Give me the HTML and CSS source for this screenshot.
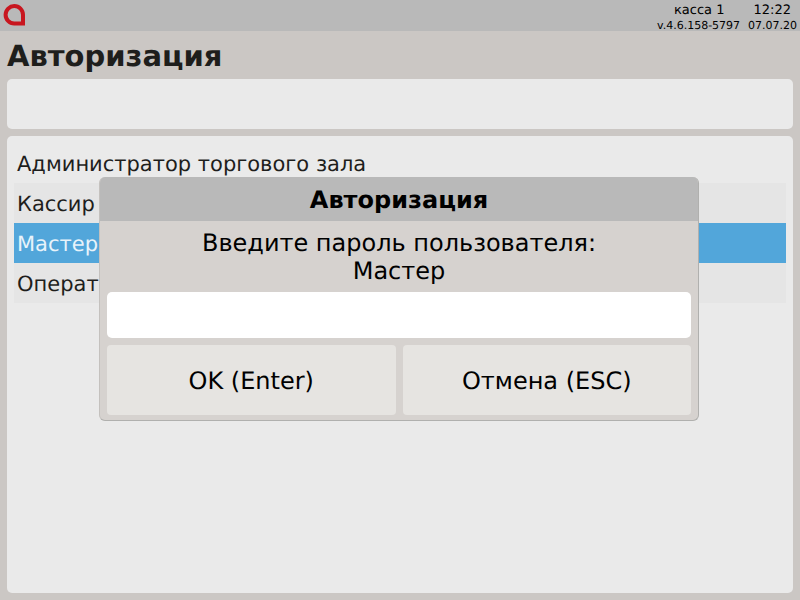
FILE: index.html
```html
<!DOCTYPE html>
<html lang="ru">
<head>
<meta charset="utf-8">
<title>Авторизация</title>
<link rel="stylesheet" href="styles.css">
</head>
<body>
<div class="screen">
  <header class="topbar">
    <svg class="logo" width="22" height="22" viewBox="0 0 22 22" aria-hidden="true">
      <path class="logo-mark" d="M20 19.5H11.2A8.7 8.7 0 1 1 20 10.8Z"/>
    </svg>
    <div class="status">
      <div class="status-line status-main"><span>касса 1</span><span class="clock">12:22</span></div>
      <div class="status-line status-sub"><span>v.4.6.158-5797</span><span>07.07.20</span></div>
    </div>
  </header>
  <main class="content">
    <h1 class="title">Авторизация</h1>
    <section class="panel panel-top"></section>
    <section class="panel panel-list">
      <div class="row">Администратор торгового зала</div>
      <div class="row row-alt">Кассир</div>
      <div class="row row-active">Мастер</div>
      <div class="row row-alt">Оператор</div>
    </section>
  </main>
  <div class="dialog">
    <div class="dialog-head">Авторизация</div>
    <div class="dialog-body">
      <p class="prompt">Введите пароль пользователя:<br>Мастер</p>
      <div class="password"></div>
      <div class="buttons">
        <div class="btn">OK (Enter)</div>
        <div class="btn">Отмена (ESC)</div>
      </div>
    </div>
  </div>
</div>
</body>
</html>
```
FILE: styles.css
```css
* { box-sizing: border-box; }
html, body { margin: 0; padding: 0; }
body { font-family: "DejaVu Sans", sans-serif; color: #1e1e1c; background: #cbc7c4; text-rendering: geometricPrecision; }
.screen { position: relative; width: 800px; height: 600px; overflow: hidden; background: #cbc7c4; display: flex; flex-direction: column; }
.topbar { height: 31px; flex: none; background: #b9b9b9; display: flex; justify-content: space-between; padding: 4px 3px 0 3px; }
.logo { display: block; }
.logo-mark { fill: none; stroke: #c8161f; stroke-width: 4; }
.status { width: 140px; color: #000; }
.status-line { display: flex; justify-content: space-between; white-space: nowrap; }
.status-main { font-size: 13px; line-height: 11px; padding: 1px 6px 0 17px; }
.status-sub { font-size: 11px; line-height: 13px; margin-top: 3px; }
.content { flex: 1; display: flex; flex-direction: column; padding: 0 7px 7px; }
.title { margin: 0; height: 48px; font-size: 29px; line-height: 50px; font-weight: 700; color: #1e1e1c; }
.panel { background: #eaeaea; border-radius: 5px; }
.panel-top { height: 50px; flex: none; margin-bottom: 7px; }
.panel-list { flex: 1; padding: 7px; }
.row { height: 40px; padding-left: 3px; font-size: 21px; line-height: 43px; }
.row-alt { background: #e5e5e5; }
.row-active { background: #52a6da; color: #e8f3fa; }
.dialog { position: absolute; left: 99px; top: 177px; width: 600px; height: 244px; background: #d6d2cf; border-radius: 6px; border-right: 1px solid #b0b0ae; border-bottom: 1px solid #b0b0ae; border-left: 1px solid #c4c1be; overflow: hidden; display: flex; flex-direction: column; color: #000; }
.dialog-head { height: 44px; flex: none; background: #b9b9b9; text-align: center; font-size: 24px; font-weight: 700; line-height: 47px; }
.dialog-body { flex: 1; display: flex; flex-direction: column; padding: 8px 7px 5px; }
.prompt { margin: 0; height: 63px; text-align: center; font-size: 24px; line-height: 28px; }
.password { height: 46px; flex: none; background: #fff; border-radius: 5px; }
.buttons { flex: 1; display: flex; gap: 7px; margin-top: 7px; }
.btn { flex: 1; padding-top: 2px; background: #e6e4e1; border-radius: 4px; display: flex; align-items: center; justify-content: center; font-size: 24px; }
```
